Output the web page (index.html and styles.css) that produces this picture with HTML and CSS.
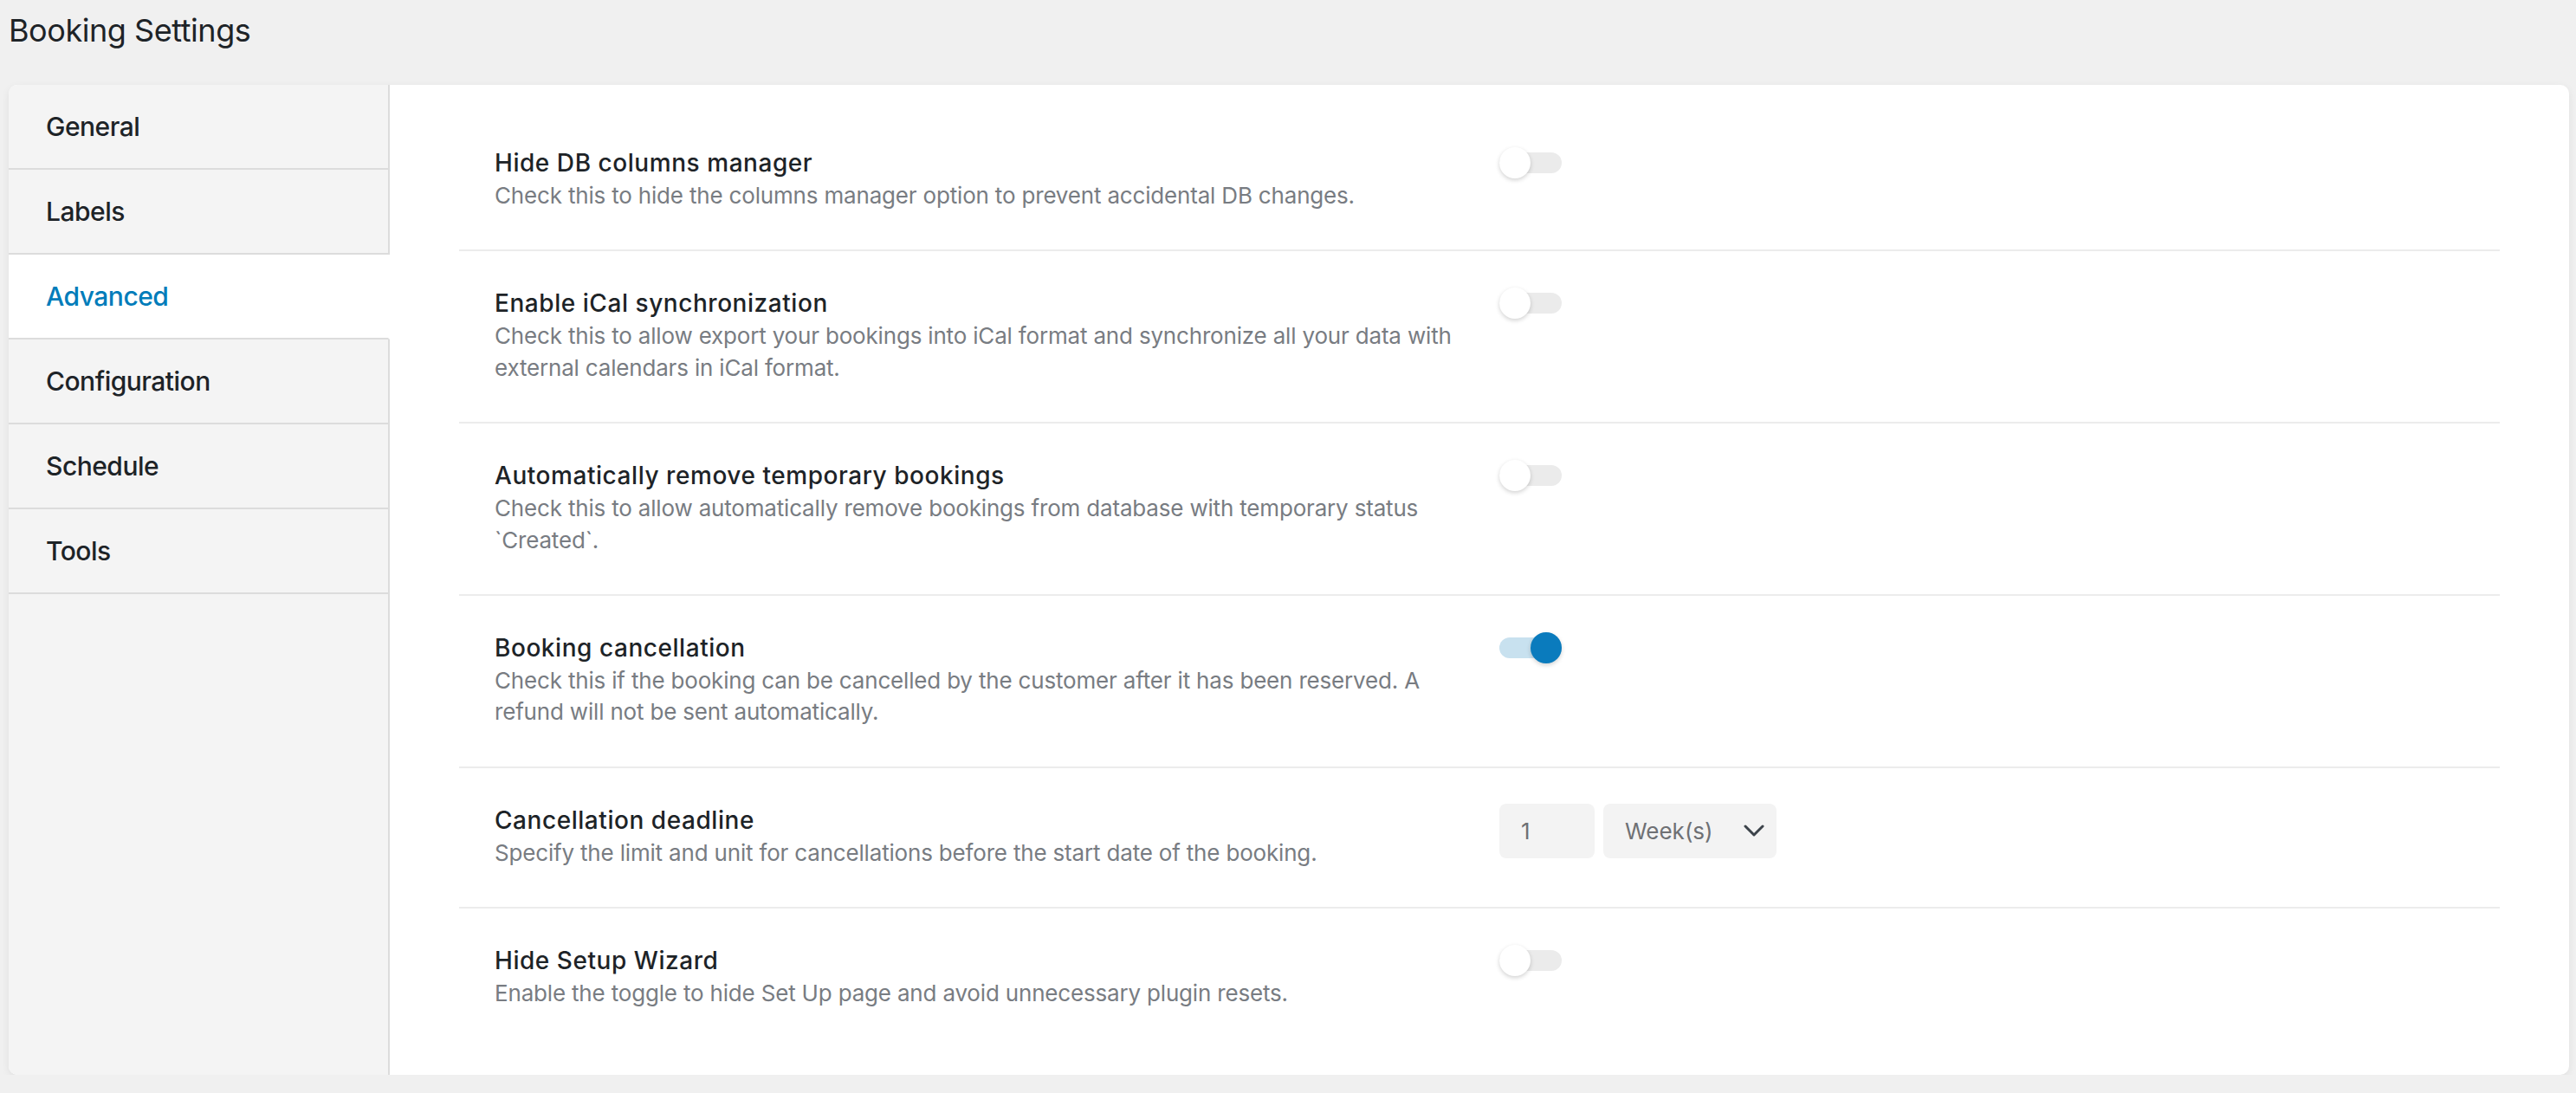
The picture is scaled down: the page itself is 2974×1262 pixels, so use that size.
FILE: index.html
```html
<!DOCTYPE html>
<html lang="en">
<head>
<meta charset="utf-8">
<title>Booking Settings</title>
<link rel="stylesheet" href="styles.css">
</head>
<body>
<div class="wrap">
  <h1 class="page-title">Booking Settings</h1>
  <div class="card">
    <nav class="sidebar">
      <a class="tab">General</a>
      <a class="tab">Labels</a>
      <a class="tab active">Advanced</a>
      <a class="tab">Configuration</a>
      <a class="tab">Schedule</a>
      <a class="tab">Tools</a>
      <div class="sidebar-fill"></div>
    </nav>
    <section class="content">
      <div class="row">
        <div class="label">
          <div class="title">Hide DB columns manager</div>
          <div class="desc">Check this to hide the columns manager option to prevent accidental DB changes.</div>
        </div>
        <div class="control"><span class="toggle"><span class="knob"></span></span></div>
      </div>
      <div class="row">
        <div class="label">
          <div class="title">Enable iCal synchronization</div>
          <div class="desc">Check this to allow export your bookings into iCal format and synchronize all your data with external calendars in iCal format.</div>
        </div>
        <div class="control"><span class="toggle"><span class="knob"></span></span></div>
      </div>
      <div class="row">
        <div class="label">
          <div class="title">Automatically remove temporary bookings</div>
          <div class="desc">Check this to allow automatically remove bookings from database with temporary status `Created`.</div>
        </div>
        <div class="control"><span class="toggle"><span class="knob"></span></span></div>
      </div>
      <div class="row">
        <div class="label">
          <div class="title">Booking cancellation</div>
          <div class="desc">Check this if the booking can be cancelled by the customer after it has been reserved. A refund will not be sent automatically.</div>
        </div>
        <div class="control"><span class="toggle on"><span class="knob"></span></span></div>
      </div>
      <div class="row">
        <div class="label">
          <div class="title">Cancellation deadline</div>
          <div class="desc">Specify the limit and unit for cancellations before the start date of the booking.</div>
        </div>
        <div class="control inputs">
          <div class="field num">1</div>
          <div class="field select"><span>Week(s)</span>
            <svg class="chev" width="24" height="14" viewBox="0 0 24 14"><polyline points="2,2 12,12 22,2" fill="none" stroke="#3c434a" stroke-width="3" stroke-linecap="round" stroke-linejoin="round"/></svg>
          </div>
        </div>
      </div>
      <div class="row">
        <div class="label">
          <div class="title">Hide Setup Wizard</div>
          <div class="desc">Enable the toggle to hide Set Up page and avoid unnecessary plugin resets.</div>
        </div>
        <div class="control"><span class="toggle"><span class="knob"></span></span></div>
      </div>
    </section>
  </div>
</div>
</body>
</html>
```

FILE: styles.css
```css
* { box-sizing: border-box; }
html, body { margin: 0; padding: 0; }
body {
  background: #f0f0f0;
  font-family: Inter, "Noto Sans", "Liberation Sans", sans-serif;
  color: #1d2327;
}
.wrap { padding: 0 8px 0 10px; }
.page-title {
  margin: 0;
  padding-top: 13px;
  height: 98px;
  font-size: 36px;
  line-height: 44px;
  font-weight: 400;
  color: #1d2327;
  letter-spacing: -0.45px;
}
.card {
  display: flex;
  background: #fff;
  border-radius: 10px;
  box-shadow: 0 3px 10px rgba(0,0,0,0.07);
  overflow: hidden;
  min-height: 1143px;
}
.sidebar {
  width: 440px;
  flex: none;
  display: flex;
  flex-direction: column;
  background: #f4f4f4;
}
.tab {
  display: flex;
  align-items: center;
  height: 98px;
  padding-left: 43px;
  font-size: 30px;
  font-weight: 500;
  color: #1d2327;
  border-bottom: 2px solid #dcdcdc;
  border-right: 2px solid #dcdcdc;
  letter-spacing: -0.5px;
}
.tab.active {
  background: #fff;
  color: #007cba;
  border-right-color: #fff;
}
.sidebar-fill { flex: 1; border-right: 2px solid #dcdcdc; }
.content {
  flex: 1;
  padding: 30px 80px 31px 80px;
}
.row {
  display: grid;
  grid-template-columns: 1140px 1fr;
  column-gap: 20px;
  padding: 43px 40px 44px 41px;
  border-bottom: 2px solid #ececec;
}
.row:last-child { border-bottom: none; }
.title {
  font-size: 28px;
  line-height: 34px;
  font-weight: 500;
  color: #1d2327;
  letter-spacing: 0.55px;
  margin-bottom: 3px;
}
.desc {
  font-size: 26px;
  line-height: 36.4px;
  color: #787c82;
  letter-spacing: -0.18px;
}
.control { display: flex; align-items: flex-start; }
.toggle {
  position: relative;
  display: block;
  width: 72px;
  height: 36px;
  margin-top: -1px;
}
.toggle::before {
  content: "";
  position: absolute;
  left: 0; top: 6px;
  width: 72px; height: 24px;
  border-radius: 12px;
  background: #ebebeb;
}
.toggle .knob {
  position: absolute;
  left: 0; top: 0;
  width: 36px; height: 36px;
  border-radius: 50%;
  background: #fff;
  box-shadow: 0 2px 5px rgba(0,0,0,0.18);
}
.toggle.on::before { background: #c8e1ef; }
.toggle.on .knob { left: 36px; background: #0a7bbd; }
.inputs { gap: 10px; margin-top: -2px; }
.field {
  height: 63px;
  border-radius: 8px;
  background: #f3f3f3;
  display: flex;
  align-items: center;
  font-size: 26px;
  color: #6e7074;
}
.field.num { width: 110px; padding-left: 25px; }
.field.select { width: 200px; padding: 0 14px 0 25px; justify-content: space-between; }
.chev { display: block; }
```
